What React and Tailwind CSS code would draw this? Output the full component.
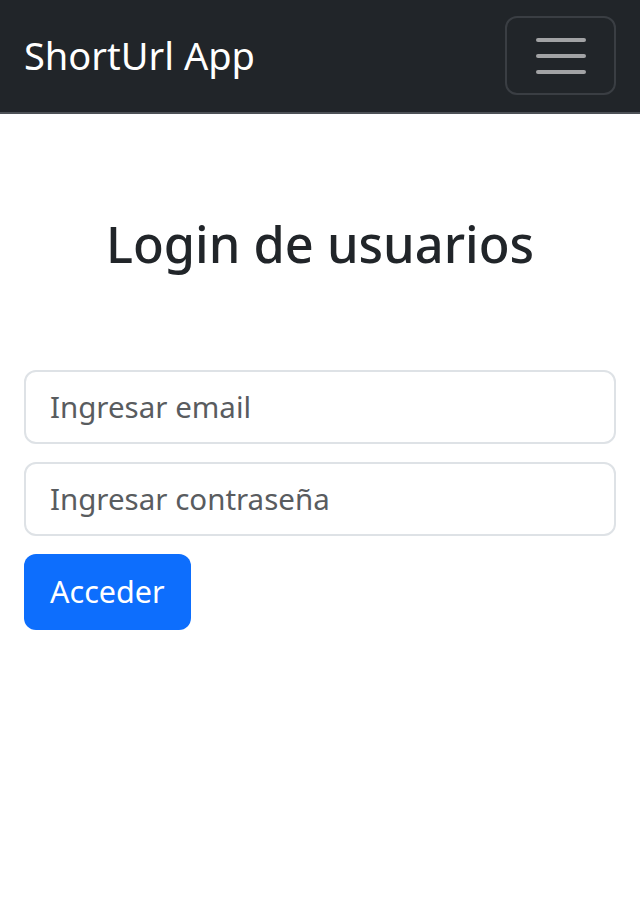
export default function App() {
  const font = { fontFamily: '"Noto Sans", "Open Sans", sans-serif' };
  return (
    <div className="min-h-[922px] bg-white" style={font}>
      <nav className="h-[114px] bg-[#212529] border-b-2 border-[#4d5157] flex items-center justify-between px-6">
        <span className="text-[38px] text-white leading-none -mt-[2px]">ShortUrl App</span>
        <button className="w-[111px] h-[79px] -mt-[1px] border-2 border-[#3a3e43] rounded-[12px] flex items-center justify-center">
          <svg width="52" height="40" viewBox="0 0 52 40">
            <g stroke="#a2a3a5" strokeWidth="4" strokeLinecap="round">
              <line x1="3" y1="4" x2="49" y2="4" />
              <line x1="3" y1="20" x2="49" y2="20" />
              <line x1="3" y1="36" x2="49" y2="36" />
            </g>
          </svg>
        </button>
      </nav>
      <div className="px-6">
        <h1 className="text-center text-[50.5px] font-medium text-[#212529] leading-[67.5px] mt-[96px]">Login de usuarios</h1>
        <div className="mt-[92px] flex flex-col gap-[18px]">
          <input
            className="h-[74px] w-full border-2 border-[#dee2e6] rounded-[12px] px-6 text-[29.5px] text-[#212529] placeholder:text-[#595c5f] outline-none"
            placeholder="Ingresar email"
          />
          <input
            type="password"
            className="h-[74px] w-full border-2 border-[#dee2e6] rounded-[12px] px-6 text-[29.5px] text-[#212529] placeholder:text-[#595c5f] outline-none"
            placeholder="Ingresar contraseña"
          />
          <div>
            <button className="h-[76px] px-[26px] bg-[#0d6efd] text-white text-[30.5px] rounded-[12px]">Acceder</button>
          </div>
        </div>
      </div>
    </div>
  );
}
